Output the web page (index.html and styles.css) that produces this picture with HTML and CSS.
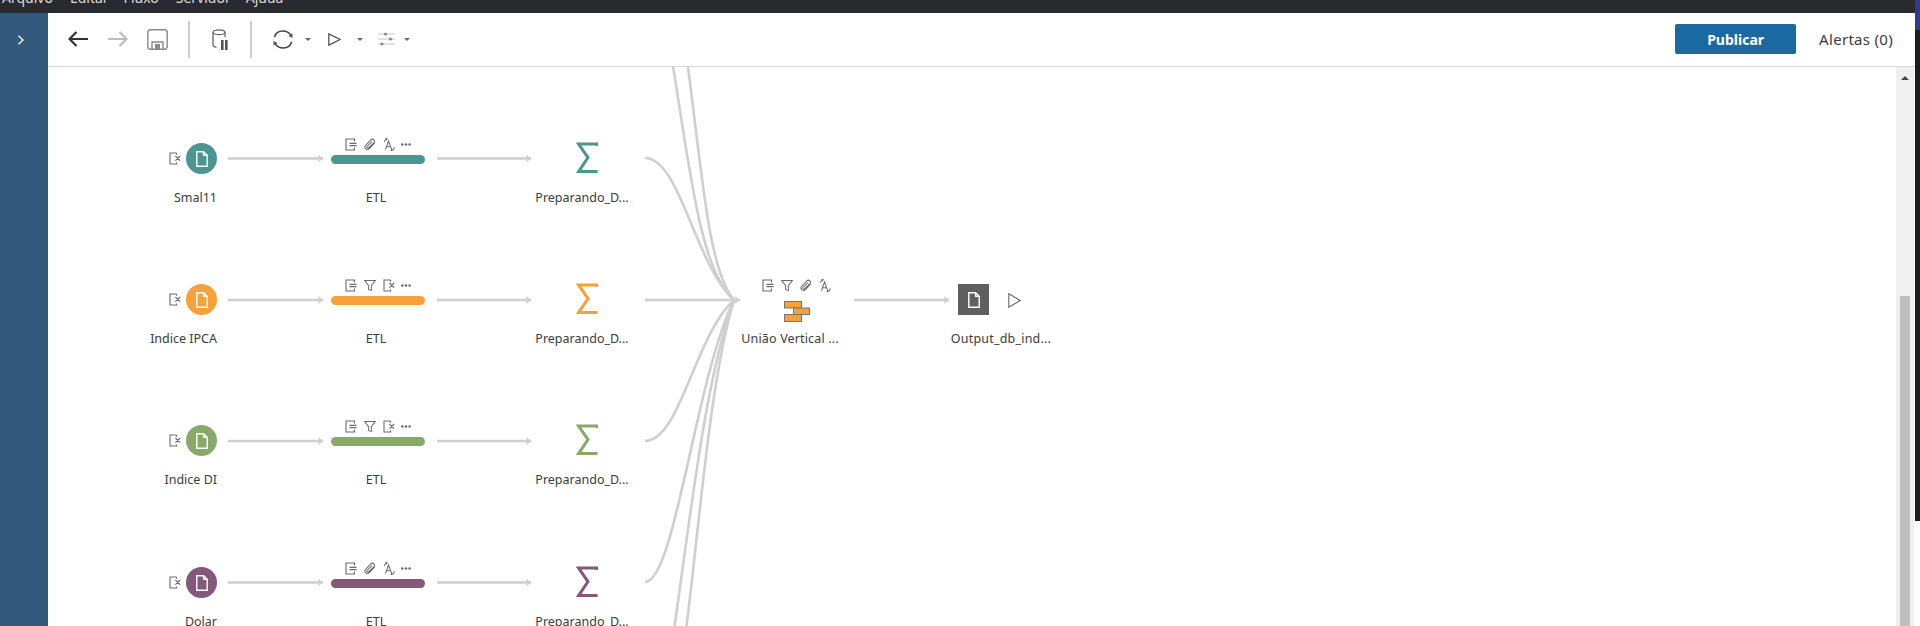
FILE: index.html
```html
<!DOCTYPE html>
<html lang="pt-br">
<head>
    <meta charset="UTF-8">
    <title>Fluxo</title>
    <link rel="stylesheet" href="styles.css">
</head>
<body>
    <!-- icones reaproveitados -->
    <svg class="defs" aria-hidden="true">
        <defs>
            <symbol id="i-doc" viewBox="0 0 12 16">
                <path d="M.8.8H7.6L11.2 4.4V15.2H.8Z M7.6.8V4.4H11.2" />
            </symbol>
            <symbol id="i-saida" viewBox="0 0 12 13">
                <path d="M9.5 3.6V1H1V12H9.5V9.4 M4.5 5.4H11.5 M4.5 7.6H11.5" />
            </symbol>
            <symbol id="i-clipe" viewBox="0 0 13 13">
                <path d="M11.6 4.8 5.8 10.9C3.4 13.4-.6 10.4 1.8 7.4L7.4 1.6C9.6-.6 13 2.2 10.6 4.6L5.2 10C4 11.2 2.4 9.8 3.6 8.4L8.6 3.4" />
            </symbol>
            <symbol id="i-renomear" viewBox="0 0 13 14">
                <path d="M2.6 12.6 6 3.2 9.4 12.6 M3.8 9.4H8.2 M1.6 4.4C1.6 2.8 2.4 1.6 3.8 1 M3.8 .2V2.4 M2.6 1.2 3.8 .2 5 1.2 M8.4 13.6C10.4 13.6 12 12.6 12.4 10.2 M8.4 13.6 9.6 12.6 M8.4 13.6 9.6 14.6" />
            </symbol>
            <symbol id="i-excluir" viewBox="0 0 12 13">
                <path d="M7.6 1H1V12H7.6V10.4 M7.6 1V2.8 M6.4 4 11.2 8.6 M11.2 4 6.4 8.6" />
            </symbol>
            <symbol id="i-filtro" viewBox="0 0 13 13">
                <path d="M.8 1.2H12.2L8 6.6V11.8L5 11V6.6Z" />
            </symbol>
            <symbol id="i-mais" viewBox="0 0 10 3">
                <circle cx="1.4" cy="1.5" r="1.2" />
                <circle cx="5" cy="1.5" r="1.2" />
                <circle cx="8.6" cy="1.5" r="1.2" />
            </symbol>
            <symbol id="i-soma" viewBox="0 0 22 32">
                <path d="M21 4V2H2.6L12 15.6 2.6 29.6H21.6" />
            </symbol>
            <marker id="seta" viewBox="0 0 6 8" refX="5.5" refY="4" markerWidth="6" markerHeight="8" markerUnits="userSpaceOnUse" orient="auto">
                <path d="M0 0 6 4 0 8 1.5 4Z" fill="#cfcfcf" />
            </marker>
        </defs>
    </svg>

    <div class="janela">
        <div class="menu">
            <span class="menu-item m-arquivo">Arquivo</span>
            <span class="menu-item m-editar">Editar</span>
            <span class="menu-item m-fluxo">Fluxo</span>
            <span class="menu-item m-servidor">Servidor</span>
            <span class="menu-item m-ajuda">Ajuda</span>
        </div>

        <div class="corpo">
            <aside class="lateral">
                <svg class="chevron" viewBox="0 0 8 10"><path d="M1.5 .8 6 5 1.5 9.2" /></svg>
            </aside>

            <div class="conteudo">
                <header class="barra">
                    <svg class="ferramenta voltar" viewBox="0 0 20 16"><path d="M20 8H1.5 M8.5 1 1.5 8 8.5 15" /></svg>
                    <svg class="ferramenta avancar" viewBox="0 0 20 16"><path d="M0 8H18.5 M11.5 1 18.5 8 11.5 15" /></svg>
                    <svg class="ferramenta salvar" viewBox="0 0 21 21">
                        <path d="M2.5 .8H18.5L20.2 2.5V18.5L18.5 20.2H2.5L.8 18.5V2.5Z" />
                        <path d="M5 20V13H16V20" />
                        <rect class="cheio" x="8" y="15" width="5" height="5" />
                    </svg>
                    <span class="divisor"></span>
                    <svg class="ferramenta banco" viewBox="0 0 16 21">
                        <ellipse cx="7" cy="3.2" rx="6" ry="2.4" />
                        <path d="M1 3.2V16C1 17.2 2.6 18 4.5 18.4 M13 3.2V8" />
                        <rect class="cheio-escuro" x="9" y="11" width="2.6" height="10" />
                        <rect class="cheio-escuro" x="13" y="11" width="2.6" height="10" />
                    </svg>
                    <span class="divisor"></span>
                    <svg class="ferramenta atualizar" viewBox="0 0 20 19">
                        <path d="M1.4 7.2C2.4 3.4 5.6 1 9.6 1 13.4 1 16.4 2.8 18 5.6 M18.6 11.8C17.6 15.6 14.4 18 10.4 18 6.6 18 3.6 16.2 2 13.4" />
                        <path class="cheio-escuro" d="M19.6 3.4 19.4 8 15.4 6Z M.4 15.6 .6 11 4.6 13Z" />
                    </svg>
                    <span class="caret"></span>
                    <svg class="ferramenta executar" viewBox="0 0 13 13"><path d="M.8.8 12 6.5 .8 12.2Z" /></svg>
                    <span class="caret"></span>
                    <svg class="ferramenta ajustes" viewBox="0 0 17 14">
                        <path d="M0 2H17 M0 7H17 M0 12H17" />
                        <circle class="botao" cx="7.5" cy="2" r="1.6" />
                        <circle class="botao" cx="12.5" cy="7" r="1.6" />
                        <circle class="botao" cx="4" cy="12" r="1.6" />
                    </svg>
                    <span class="caret"></span>
                    <button class="publicar">Publicar</button>
                    <span class="alertas">Alertas (0)</span>
                </header>

                <div class="area">
                    <main class="canvas">
                        <!-- ligacoes em coordenadas de tela -->
                        <svg class="ligacoes" viewBox="48 67 1848 559">
                            <path class="seta" d="M228 158.5H323" />
                            <path class="seta" d="M437 158.5H531" />
                            <path class="seta" d="M228 300H323" />
                            <path class="seta" d="M437 300H531" />
                            <path class="seta" d="M228 441H323" />
                            <path class="seta" d="M437 441H531" />
                            <path class="seta" d="M228 582.5H323" />
                            <path class="seta" d="M437 582.5H531" />
                            <path d="M672 60C690 170 700 270 734 300" />
                            <path d="M687 60C702 170 708 270 734 300" />
                            <path d="M645 158C680 158 695 265 734 300" />
                            <path d="M645 441C680 441 695 335 734 300" />
                            <path d="M645 582C675 582 695 380 734 300" />
                            <path d="M674 630C690 520 705 380 734 300" />
                            <path d="M686 630C700 520 710 380 734 300" />
                            <path class="seta" d="M645 300H740" />
                            <path class="seta" d="M854 300H949" />
                        </svg>

                        <section class="linha linha-1 teal">
                            <svg class="icone excluir-entrada"><use href="#i-excluir" /></svg>
                            <div class="entrada"><svg class="doc"><use href="#i-doc" /></svg></div>
                            <div class="rotulo rotulo-entrada">Smal11</div>
                            <div class="icones">
                                <svg class="icone"><use href="#i-saida" /></svg>
                                <svg class="icone"><use href="#i-clipe" /></svg>
                                <svg class="icone"><use href="#i-renomear" /></svg>
                                <svg class="icone mais"><use href="#i-mais" /></svg>
                            </div>
                            <div class="etl"></div>
                            <div class="rotulo rotulo-etl">ETL</div>
                            <svg class="soma"><use href="#i-soma" /></svg>
                            <div class="rotulo rotulo-soma">Preparando_D...</div>
                        </section>

                        <section class="linha linha-2 laranja">
                            <svg class="icone excluir-entrada"><use href="#i-excluir" /></svg>
                            <div class="entrada"><svg class="doc"><use href="#i-doc" /></svg></div>
                            <div class="rotulo rotulo-entrada">Indice IPCA</div>
                            <div class="icones">
                                <svg class="icone"><use href="#i-saida" /></svg>
                                <svg class="icone"><use href="#i-filtro" /></svg>
                                <svg class="icone"><use href="#i-excluir" /></svg>
                                <svg class="icone mais"><use href="#i-mais" /></svg>
                            </div>
                            <div class="etl"></div>
                            <div class="rotulo rotulo-etl">ETL</div>
                            <svg class="soma"><use href="#i-soma" /></svg>
                            <div class="rotulo rotulo-soma">Preparando_D...</div>

                            <div class="icones icones-uniao">
                                <svg class="icone"><use href="#i-saida" /></svg>
                                <svg class="icone"><use href="#i-filtro" /></svg>
                                <svg class="icone"><use href="#i-clipe" /></svg>
                                <svg class="icone"><use href="#i-renomear" /></svg>
                            </div>
                            <svg class="uniao" viewBox="0 0 26 21">
                                <rect x=".5" y=".5" width="17" height="6.5" />
                                <rect x="9.5" y="7" width="16" height="6.5" />
                                <rect x=".5" y="13.5" width="17" height="7" />
                            </svg>
                            <div class="rotulo rotulo-uniao">União Vertical ...</div>

                            <div class="saida"><svg class="doc"><use href="#i-doc" /></svg></div>
                            <svg class="rodar" viewBox="0 0 13 15"><path d="M.8.8 12.2 7.5 .8 14.2Z" /></svg>
                            <div class="rotulo rotulo-saida">Output_db_ind...</div>
                        </section>

                        <section class="linha linha-3 verde">
                            <svg class="icone excluir-entrada"><use href="#i-excluir" /></svg>
                            <div class="entrada"><svg class="doc"><use href="#i-doc" /></svg></div>
                            <div class="rotulo rotulo-entrada">Indice DI</div>
                            <div class="icones">
                                <svg class="icone"><use href="#i-saida" /></svg>
                                <svg class="icone"><use href="#i-filtro" /></svg>
                                <svg class="icone"><use href="#i-excluir" /></svg>
                                <svg class="icone mais"><use href="#i-mais" /></svg>
                            </div>
                            <div class="etl"></div>
                            <div class="rotulo rotulo-etl">ETL</div>
                            <svg class="soma"><use href="#i-soma" /></svg>
                            <div class="rotulo rotulo-soma">Preparando_D...</div>
                        </section>

                        <section class="linha linha-4 roxo">
                            <svg class="icone excluir-entrada"><use href="#i-excluir" /></svg>
                            <div class="entrada"><svg class="doc"><use href="#i-doc" /></svg></div>
                            <div class="rotulo rotulo-entrada">Dolar</div>
                            <div class="icones">
                                <svg class="icone"><use href="#i-saida" /></svg>
                                <svg class="icone"><use href="#i-clipe" /></svg>
                                <svg class="icone"><use href="#i-renomear" /></svg>
                                <svg class="icone mais"><use href="#i-mais" /></svg>
                            </div>
                            <div class="etl"></div>
                            <div class="rotulo rotulo-etl">ETL</div>
                            <svg class="soma"><use href="#i-soma" /></svg>
                            <div class="rotulo rotulo-soma">Preparando_D...</div>
                        </section>
                    </main>

                    <div class="rolagem">
                        <span class="rolagem-seta"></span>
                        <span class="rolagem-polegar"></span>
                    </div>
                </div>
            </div>
        </div>
    </div>

    <div class="borda">
        <div class="borda-azul"></div>
        <div class="borda-escura"></div>
    </div>
</body>
</html>
```

FILE: styles.css
```css
* {
    box-sizing: border-box;
}
html, body {
    height: 100%;
}
body {
    margin: 0;
    display: flex;
    overflow: hidden;
    background-color: #fff;
    font-family: "Noto Sans", "Open Sans", sans-serif;
    color: #3c3c3c;
}
.defs {
    position: absolute;
    width: 0;
    height: 0;
}

/* janela */
.janela {
    flex: 1;
    min-width: 0;
    display: flex;
    flex-direction: column;
}
.borda {
    width: 5px;
    display: flex;
    flex-direction: column;
}
.borda-azul {
    height: 30px;
    background-color: #2f3b8e;
    border-bottom: 1px solid #3f3f46;
}
.borda-escura {
    height: 491px;
    background-color: #1c1c1c;
}

/* menu cortado no topo */
.menu {
    height: 13px;
    flex: none;
    display: flex;
    align-items: flex-end;
    padding-bottom: 6px;
    background-color: #292a30;
    color: #dcdcdc;
    font-size: 14px;
    line-height: 19px;
}
.menu-item {
    flex: none;
}
.m-arquivo { margin-left: 2px; }
.m-editar { margin-left: 17px; }
.m-fluxo { margin-left: 15px; }
.m-servidor { margin-left: 17px; }
.m-ajuda { margin-left: 15px; }

.corpo {
    flex: 1;
    min-height: 0;
    display: flex;
}
.lateral {
    width: 48px;
    flex: none;
    background-color: #33597d;
    padding: 22px 0 0 17px;
}
.chevron {
    display: block;
    width: 8px;
    height: 10px;
    fill: none;
    stroke: #fff;
    stroke-width: 1.3;
}
.conteudo {
    flex: 1;
    min-width: 0;
    display: flex;
    flex-direction: column;
}

/* barra de ferramentas */
.barra {
    height: 54px;
    flex: none;
    display: flex;
    align-items: center;
    padding: 0 22px 1px 20px;
    border-bottom: 1px solid #d6d6d6;
}
.ferramenta {
    flex: none;
    fill: none;
    stroke: #666;
    stroke-width: 1.3;
}
.voltar {
    width: 20px;
    height: 16px;
    stroke: #333;
    stroke-width: 2.2;
}
.avancar {
    width: 20px;
    height: 16px;
    margin-left: 20px;
    stroke: #bdbdbd;
    stroke-width: 2.2;
}
.salvar {
    width: 21px;
    height: 21px;
    margin-left: 19px;
    stroke: #8a8a8a;
    stroke-width: 1.4;
}
.cheio {
    fill: #8a8a8a;
    stroke: none;
}
.cheio-escuro {
    fill: #555;
    stroke: none;
}
.divisor {
    width: 2px;
    height: 37px;
    flex: none;
    margin: 0 22px 0 20px;
    background-color: #cfcfcf;
}
.banco {
    width: 16px;
    height: 21px;
    margin-right: 2px;
}
.atualizar {
    width: 20px;
    height: 19px;
    margin-left: -1px;
    margin-right: 12px;
    stroke: #444;
    stroke-width: 1.5;
}
.executar {
    width: 13px;
    height: 13px;
    margin-left: 17px;
    margin-right: 16px;
    stroke: #555;
}
.ajustes {
    width: 17px;
    height: 14px;
    margin-left: 15px;
    margin-right: 9px;
    stroke: #c4c4c4;
    stroke-width: 1;
}
.botao {
    fill: #888;
    stroke: none;
}
.caret {
    width: 0;
    height: 0;
    flex: none;
    border-left: 3px solid transparent;
    border-right: 3px solid transparent;
    border-top: 3px solid #666;
}
.publicar {
    width: 121px;
    height: 30px;
    margin-left: auto;
    padding: 0;
    border: 0;
    border-radius: 2px;
    background-color: #1a69a0;
    color: #fff;
    font-family: inherit;
    font-size: 14px;
    font-weight: 700;
}
.alertas {
    margin-left: 23px;
    font-size: 15px;
    letter-spacing: .3px;
}

/* area do fluxo */
.area {
    flex: 1;
    min-height: 0;
    display: flex;
}
.canvas {
    position: relative;
    flex: 1;
    min-width: 0;
    overflow: hidden;
}
.ligacoes {
    position: absolute;
    left: 0;
    top: 0;
    width: 1848px;
    height: 559px;
    fill: none;
    stroke: #cfcfcf;
    stroke-width: 2.6;
}
.seta {
    marker-end: url(#seta);
}
.linha {
    position: absolute;
    left: 0;
    width: 100%;
    height: 80px;
}
.linha-1 { top: 66px; --cor: #4b9690; }
.linha-2 { top: 207px; --cor: #f6a139; }
.linha-3 { top: 348px; --cor: #88a96a; }
.linha-4 { top: 490px; --cor: #845879; }

.icone {
    flex: none;
    width: 12px;
    height: 13px;
    fill: none;
    stroke: #6a6a6a;
    stroke-width: 1.1;
    overflow: visible;
}
.mais {
    width: 10px;
    height: 3px;
    margin-left: -1px;
    fill: #666;
    stroke: none;
}
.excluir-entrada {
    position: absolute;
    left: 121px;
    top: 19px;
}
.entrada {
    position: absolute;
    left: 138px;
    top: 10px;
    width: 31px;
    height: 31px;
    display: flex;
    align-items: center;
    justify-content: center;
    border-radius: 50%;
    background-color: var(--cor);
}
.doc {
    width: 12px;
    height: 16px;
    fill: none;
    stroke: #fff;
    stroke-width: 1.4;
}
.icones {
    position: absolute;
    left: 297px;
    top: 5px;
    display: flex;
    align-items: center;
    gap: 7px;
}
.etl {
    position: absolute;
    left: 283px;
    top: 22px;
    width: 94px;
    height: 9px;
    border-radius: 5px;
    background-color: var(--cor);
}
.soma {
    position: absolute;
    left: 528px;
    top: 9px;
    width: 22px;
    height: 32px;
    fill: none;
    stroke: var(--cor);
    stroke-width: 3;
}

.rotulo {
    position: absolute;
    top: 56px;
    width: 120px;
    font-size: 12.5px;
    line-height: 18px;
    text-align: center;
    white-space: nowrap;
}
.rotulo-entrada {
    left: 49px;
    text-align: right;
}
.rotulo-etl { left: 268px; }
.rotulo-soma { left: 474px; }
.rotulo-uniao {
    left: 682px;
    letter-spacing: .15px;
}
.rotulo-saida {
    left: 893px;
    letter-spacing: .2px;
}

.icones-uniao {
    left: 714px;
}
.uniao {
    position: absolute;
    left: 736px;
    top: 27px;
    width: 26px;
    height: 21px;
    fill: #f6a139;
    stroke: #777;
    stroke-width: 1;
}
.saida {
    position: absolute;
    left: 910px;
    top: 10px;
    width: 31px;
    height: 31px;
    display: flex;
    align-items: center;
    justify-content: center;
    background-color: #5f5f5f;
}
.rodar {
    position: absolute;
    left: 960px;
    top: 19px;
    width: 13px;
    height: 15px;
    fill: none;
    stroke: #666;
    stroke-width: 1.1;
}

/* barra de rolagem */
.rolagem {
    width: 18px;
    flex: none;
    margin-right: 1px;
    display: flex;
    flex-direction: column;
    align-items: center;
    justify-content: space-between;
    padding-top: 9px;
    background-color: #f0f0f0;
}
.rolagem-seta {
    width: 0;
    height: 0;
    border-left: 4px solid transparent;
    border-right: 4px solid transparent;
    border-bottom: 4px solid #3b4a5a;
}
.rolagem-polegar {
    width: 10px;
    height: 330px;
    background-color: #bebebe;
}
```
